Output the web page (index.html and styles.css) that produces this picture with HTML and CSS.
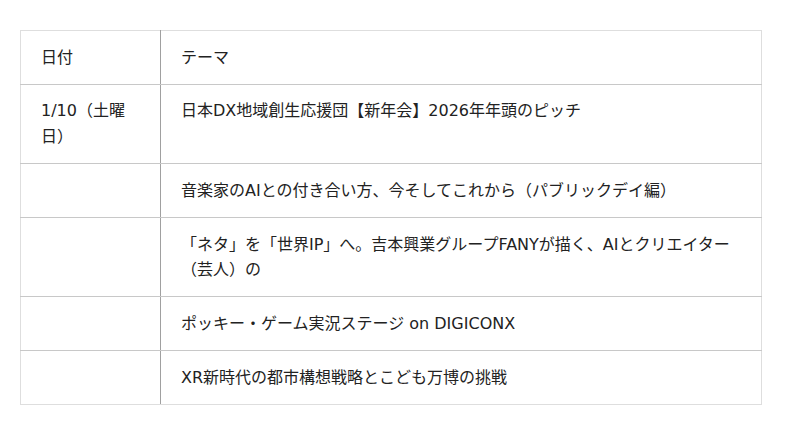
FILE: index.html
```html
<!DOCTYPE html>
<html lang="ja">
<head>
<meta charset="utf-8">
<link rel="stylesheet" href="styles.css">
</head>
<body>
<table class="schedule">
  <tr><td class="date">日付</td><td class="theme">テーマ</td></tr>
  <tr><td class="date">1/10（土曜日）</td><td class="theme">日本DX地域創生応援団【新年会】2026年年頭のピッチ</td></tr>
  <tr><td class="date"></td><td class="theme">音楽家のAIとの付き合い方、今そしてこれから（パブリックデイ編）</td></tr>
  <tr><td class="date"></td><td class="theme">「ネタ」を「世界IP」へ。吉本興業グループFANYが描く、AIとクリエイター（芸人）の</td></tr>
  <tr><td class="date"></td><td class="theme">ポッキー・ゲーム実況ステージ on DIGICONX</td></tr>
  <tr><td class="date"></td><td class="theme">XR新時代の都市構想戦略とこども万博の挑戦</td></tr>
</table>
</body>
</html>
```
FILE: styles.css
```css
html, body {
  margin: 0;
  padding: 0;
  background: #fff;
}
body {
  padding: 30px 0 0 20px;
  font-family: "DejaVu Sans", "Noto Sans CJK JP", sans-serif;
  font-size: 16px;
  color: #222;
}
.schedule {
  border-collapse: collapse;
  width: 742px;
  table-layout: fixed;
}
.schedule td {
  border: 1px solid #c8c8c8;
  padding: 13.6px 20px;
  line-height: 25.6px;
  vertical-align: top;
  text-align: left;
}
.schedule td.date {
  width: 99px;
  border-left-color: #dedede;
  border-right-color: #a0a0a0;
}
.schedule td.theme {
  border-right-color: #dedede;
}
.schedule tr:first-child td {
  border-top-color: #dedede;
}
.schedule tr:last-child td {
  border-bottom-color: #dedede;
}
```
